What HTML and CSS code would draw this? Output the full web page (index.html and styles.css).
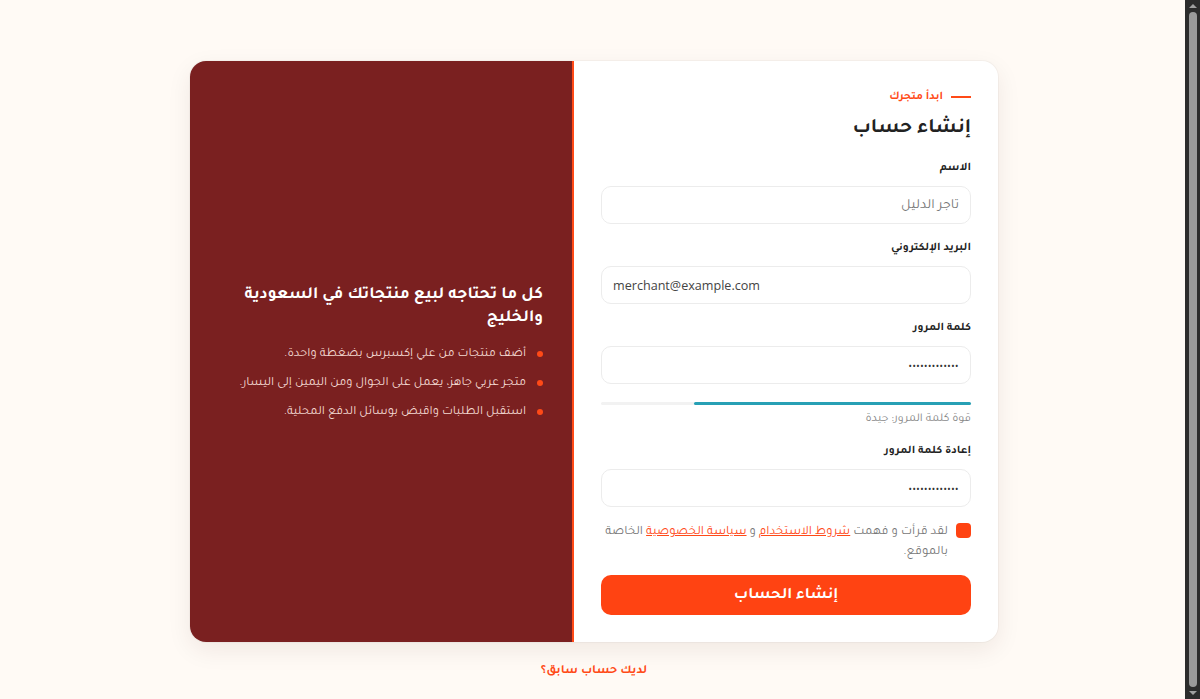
FILE: index.html
```html
<!DOCTYPE html>
<html lang="ar" dir="rtl">
<head>
<meta charset="utf-8">
<title>إنشاء حساب</title>
<link rel="stylesheet" href="styles.css">
</head>
<body>
<main class="page">
  <section class="card">
    <div class="form-panel">
      <div class="eyebrow"><span class="eyebrow-line"></span>ابدأ متجرك</div>
      <h1 class="title">إنشاء حساب</h1>
      <form class="form">
        <div class="field">
          <label class="label">الاسم</label>
          <div class="input placeholder">تاجر الدليل</div>
        </div>
        <div class="field">
          <label class="label">البريد الإلكتروني</label>
          <div class="input ltr">merchant@example.com</div>
        </div>
        <div class="field field-pass">
          <label class="label">كلمة المرور</label>
          <div class="input dots">•••••••••••••</div>
        </div>
        <div class="strength">
          <div class="strength-track"><div class="strength-fill" style="width:75%"></div></div>
          <div class="strength-text">قوة كلمة المرور: جيدة</div>
        </div>
        <div class="field">
          <label class="label">إعادة كلمة المرور</label>
          <div class="input dots">•••••••••••••</div>
        </div>
        <div class="terms">
          <span class="check"></span>
          <p class="terms-text">لقد قرأت و فهمت <a href="#">شروط الاستخدام</a> و <a href="#">سياسة الخصوصية</a> الخاصة بالموقع.</p>
        </div>
        <button type="button" class="submit">إنشاء الحساب</button>
      </form>
    </div>
    <aside class="promo">
      <div class="promo-inner">
        <h2 class="promo-title">كل ما تحتاجه لبيع منتجاتك في السعودية والخليج</h2>
        <ul class="promo-list">
          <li>أضف منتجات من علي إكسبرس بضغطة واحدة.</li>
          <li>متجر عربي جاهز، يعمل على الجوال ومن اليمين إلى اليسار.</li>
          <li>استقبل الطلبات واقبض بوسائل الدفع المحلية.</li>
        </ul>
      </div>
    </aside>
  </section>
  <a class="login-link" href="#">لديك حساب سابق؟</a>
</main>
<div class="scrollbar" aria-hidden="true">
  <span class="sb-arrow sb-up"></span>
  <span class="sb-thumb"></span>
  <span class="sb-arrow sb-down"></span>
</div>
</body>
</html>
```
FILE: styles.css
```css
* { box-sizing: border-box; }
body {
  margin: 0;
  background: #fffaf5;
  font-family: "Tajawal", "Noto Sans", sans-serif;
  color: #222;
}
.page {
  min-height: 699px;
  padding: 61px 12px 0 0;
  display: flex;
  flex-direction: column;
  align-items: center;
}
.card {
  width: 808px;
  display: flex;
  background: #fff;
  border-radius: 16px;
  box-shadow: 0 8px 24px rgba(60, 30, 10, 0.08), 0 0 0 1px rgba(0,0,0,0.03);
  overflow: hidden;
}
.form-panel {
  width: 424px;
  padding: 28px 27px 27px;
}
.eyebrow {
  display: flex;
  align-items: center;
  gap: 8px;
  color: #ff4a17;
  font-size: 11.5px;
  font-weight: 700;
  line-height: 18px;
}
.eyebrow-line {
  width: 20px;
  height: 2px;
  background: #ff4a17;
  margin-top: -2px;
}
.title {
  margin: 6px 0 0;
  padding-top: 2px;
  font-size: 20.5px;
  font-weight: 700;
  line-height: 28px;
  color: #222;
}
.form { margin-top: 14px; }
.field { margin-bottom: 13px; }
.label {
  display: block;
  padding-top: 3px;
  font-size: 11.6px;
  font-weight: 700;
  line-height: 18px;
  color: #222;
  margin-bottom: 8px;
}
.input {
  height: 38px;
  border: 1px solid #ececec;
  border-radius: 10px;
  padding: 3px 11px 0;
  display: flex;
  align-items: center;
  font-size: 14px;
  color: #444;
}
.placeholder { color: #777; }
.ltr {
  direction: ltr;
  padding-top: 0;
  font-family: "Open Sans", "Noto Sans", sans-serif;
  font-size: 12.6px;
}
.dots {
  padding-top: 0;
  font-family: "Noto Sans", sans-serif;
  font-size: 9px;
  letter-spacing: 0.5px;
  color: #333;
}
.field-pass { margin-bottom: 18px; }
.strength { margin-bottom: 13px; }
.strength-track {
  height: 3px;
  background: #f2f2f2;
  border-radius: 2px;
}
.strength-fill {
  height: 3px;
  background: #27a0b5;
  border-radius: 2px;
}
.strength-text {
  margin-top: 5px;
  padding-top: 1px;
  font-size: 12px;
  line-height: 16px;
  color: #888;
}
.terms {
  display: flex;
  gap: 8px;
  align-items: flex-start;
  margin: 7px 0 12px;
}
.check {
  flex: none;
  width: 15px;
  height: 15px;
  border-radius: 4px;
  background: #ff4312;
  margin-top: 3px;
}
.terms-text {
  margin: 0;
  padding-top: 3px;
  font-size: 12.8px;
  line-height: 20px;
  color: #777;
}
.terms-text a { color: #ff4a17; text-underline-offset: 1px; }
.submit {
  width: 100%;
  height: 40px;
  padding-top: 3px;
  border: 0;
  border-radius: 10px;
  background: #ff4312;
  color: #fff;
  font-family: inherit;
  font-size: 16px;
  font-weight: 700;
}
.promo {
  width: 384px;
  background: #7a2020;
  border-right: 2px solid #ff4a17;
  display: flex;
  align-items: center;
  padding: 4px 29px 0;
}
.promo-title {
  margin: 0 0 14px;
  font-size: 17px;
  font-weight: 700;
  line-height: 23px;
  color: #fff;
}
.promo-list {
  list-style: none;
  margin: 0;
  padding: 0;
}
.promo-list li {
  position: relative;
  padding-right: 17px;
  font-size: 12.6px;
  line-height: 21px;
  margin-bottom: 8px;
  color: #f3d9d2;
}
.promo-list li:last-child { margin-bottom: 0; }
.promo-list li::before {
  content: "";
  position: absolute;
  right: 0;
  top: 7px;
  width: 6px;
  height: 6px;
  border-radius: 50%;
  background: #ff4a17;
}
.login-link {
  margin-top: 22px;
  color: #ff4a17;
  font-size: 12.5px;
  font-weight: 700;
  text-decoration: none;
}
.scrollbar {
  position: fixed;
  top: 0;
  right: 0;
  width: 15px;
  height: 100%;
  background: #2c2c2c;
  display: flex;
  flex-direction: column;
  align-items: center;
  padding: 3px 0;
}
.sb-arrow {
  width: 0;
  height: 0;
  border-left: 4px solid transparent;
  border-right: 4px solid transparent;
  flex: none;
}
.sb-up { border-bottom: 4px solid #a0a0a0; margin: 1px 0 4px; }
.sb-down { border-top: 4px solid #a0a0a0; margin: 4px 0 1px; }
.sb-thumb {
  flex: 1;
  width: 8px;
  background: #9a9a9a;
  border-radius: 4px;
}
```
